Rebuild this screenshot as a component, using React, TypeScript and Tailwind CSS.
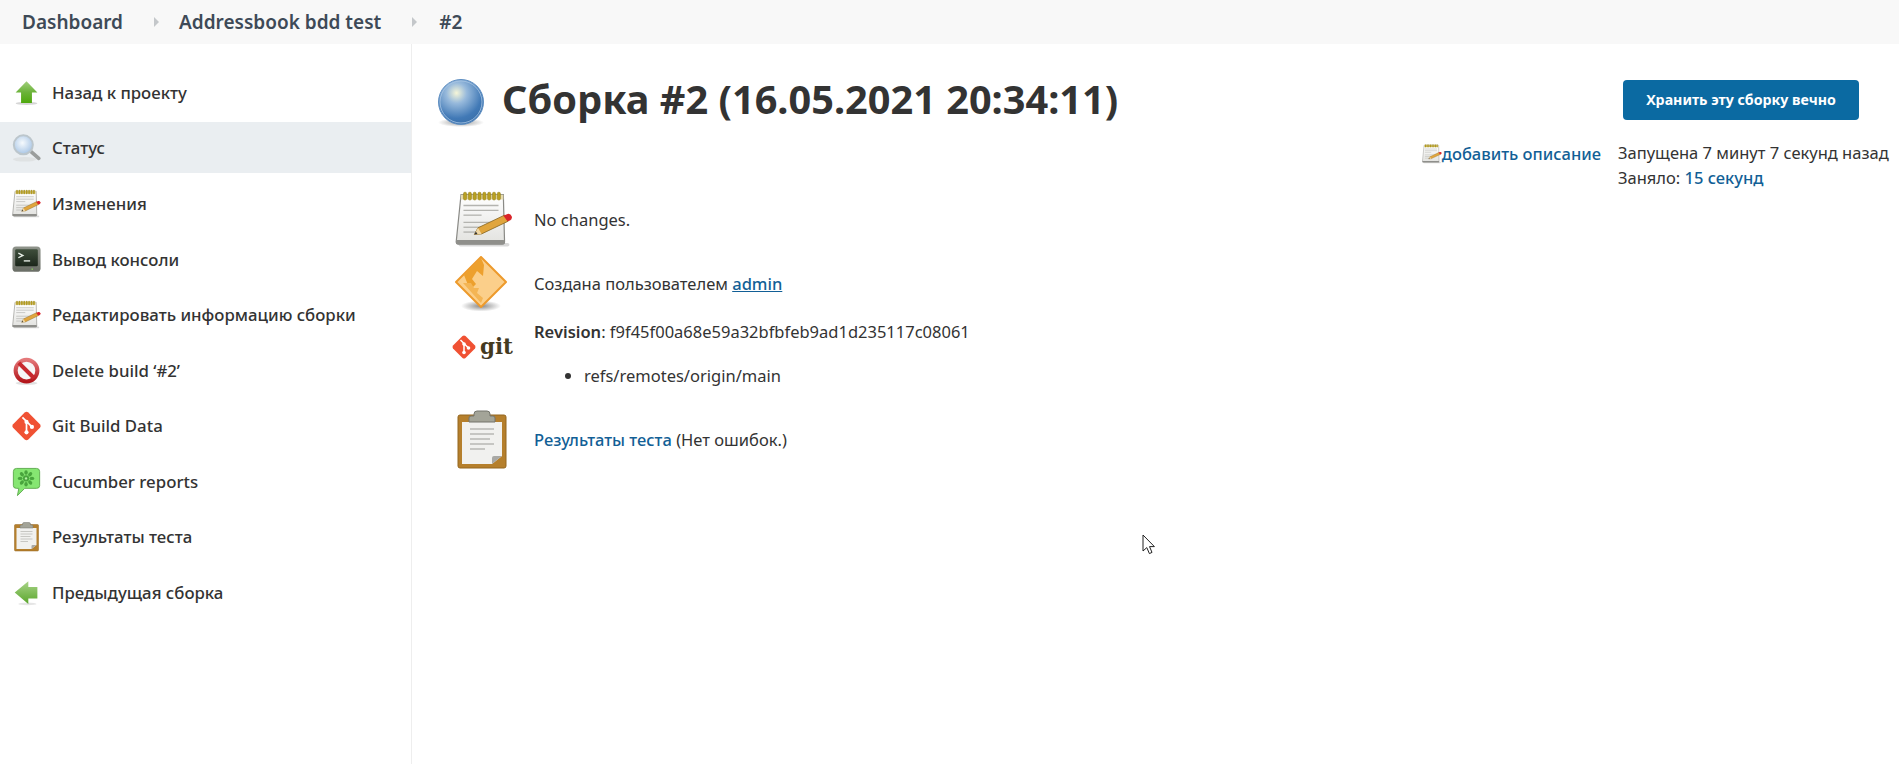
import React from "react";

type IconProps = { className?: string };

function UpArrow({ className }: IconProps) {
  return (
    <svg viewBox="0 0 32 32" className={className}>
      <defs>
        <linearGradient id="up-g" x1="0" y1="0" x2="0" y2="1">
          <stop offset="0" stopColor="#a3cf7e" />
          <stop offset="0.5" stopColor="#6cb33a" />
          <stop offset="1" stopColor="#4ea80c" />
        </linearGradient>
      </defs>
      <ellipse cx="16" cy="27.5" rx="12" ry="1.8" fill="#bbb" opacity="0.6" />
      <path d="M16 3 L28 15.5 L22 15.5 L22 27 L10 27 L10 15.5 L4 15.5 Z" fill="url(#up-g)" />
    </svg>
  );
}

function LeftArrow({ className }: IconProps) {
  return (
    <svg viewBox="0 0 32 32" className={className}>
      <defs>
        <linearGradient id="left-g" x1="0" y1="0" x2="0" y2="1">
          <stop offset="0" stopColor="#a9d488" />
          <stop offset="1" stopColor="#5aa62c" />
        </linearGradient>
      </defs>
      <ellipse cx="17" cy="28" rx="10" ry="1.5" fill="#ccc" opacity="0.5" />
      <path d="M3 15.5 L18 3 L18 9.5 L28 9.5 L28 22 L18 22 L18 28 Z" fill="url(#left-g)" />
    </svg>
  );
}

function Magnifier({ className }: IconProps) {
  return (
    <svg viewBox="0 0 32 32" className={className}>
      <defs>
        <radialGradient id="mag-g" cx="0.45" cy="0.4" r="0.6">
          <stop offset="0" stopColor="#f6fafd" />
          <stop offset="1" stopColor="#a9c6e6" />
        </radialGradient>
      </defs>
      <ellipse cx="14" cy="28.5" rx="13" ry="2.5" fill="#dcdfe0" opacity="0.8" />
      <path d="M21 20 L29.5 27.5" stroke="#9a9d9c" strokeWidth="4" strokeLinecap="round" />
      <circle cx="12.5" cy="12.5" r="10.5" fill="url(#mag-g)" stroke="#bcc6cc" strokeWidth="2.2" />
    </svg>
  );
}

function Notepad({ className }: IconProps) {
  return (
    <svg viewBox="0 0 48 48" className={className}>
      <defs>
        <linearGradient id="note-g" x1="0" y1="0" x2="0" y2="1">
          <stop offset="0" stopColor="#ffffff" />
          <stop offset="1" stopColor="#e2e2df" />
        </linearGradient>
      </defs>
      <rect x="3" y="43" width="42" height="3" rx="1.5" fill="#d9d9d9" />
      <path d="M5 3 H40 L41 42 Q41 44 39 44 H3 Q1 44 1 42 Z" fill="url(#note-g)" stroke="#8a8a86" strokeWidth="1" />
      <rect x="1" y="40.5" width="40" height="3.5" rx="1" fill="#8f8f8b" />
      <path d="M5 3 H40 V7 H4.8 Z" fill="#e7dcae" />
      {[8, 12, 16, 20, 24, 28, 32, 36].map((x) => (
        <rect key={x} x={x - 1} y="1" width="2.6" height="6.5" rx="1.2" fill="#b9a021" stroke="#8e7a14" strokeWidth="0.4" />
      ))}
      <g stroke="#b4b4b0" strokeWidth="1.1">
        <path d="M7 12 H36" />
        <path d="M7 16 H36" />
        <path d="M7 20 H22" />
        <path d="M7 26 H34" />
        <path d="M7 30 H24" />
        <path d="M7 34 H20" />
      </g>
      <path d="M16 36 L19 30.5 L41 20 L44 25 L22 35.5 Z" fill="#e0a53d" stroke="#8b6a25" strokeWidth="0.7" />
      <path d="M16 36 L19 30.5 L22 35.5 Z" fill="#f0d7a4" />
      <path d="M16 36 L17.3 33.6 L18.6 35.6 Z" fill="#333" />
      <path d="M40 20.5 L43.5 19 Q46 18.5 47 21 Q47.5 23.5 45.5 24.5 L43.5 25 Z" fill="#d9252a" />
    </svg>
  );
}

function Terminal({ className }: IconProps) {
  return (
    <svg viewBox="0 0 32 32" className={className}>
      <defs>
        <linearGradient id="term-g" x1="0" y1="0" x2="0" y2="1">
          <stop offset="0" stopColor="#8f948b" />
          <stop offset="1" stopColor="#6a6e66" />
        </linearGradient>
        <linearGradient id="term-s" x1="0" y1="0" x2="0" y2="1">
          <stop offset="0" stopColor="#3f4f3c" />
          <stop offset="1" stopColor="#1b261b" />
        </linearGradient>
      </defs>
      <rect x="0.5" y="1" width="31" height="28" rx="4" fill="url(#term-g)" />
      <rect x="3.5" y="4" width="25" height="19" rx="1.5" fill="url(#term-s)" />
      <path d="M7 8.5 L12 11 L7 13.5" stroke="#e8efe8" strokeWidth="1.5" fill="none" />
      <path d="M13 17 H20" stroke="#e8efe8" strokeWidth="1.5" />
      <rect x="21.5" y="25.5" width="1.6" height="1.2" fill="#8fe25a" />
    </svg>
  );
}

function NoEntry({ className }: IconProps) {
  return (
    <svg viewBox="0 0 32 32" className={className}>
      <defs>
        <linearGradient id="no-g" x1="0" y1="0" x2="0" y2="1">
          <stop offset="0" stopColor="#e4787a" />
          <stop offset="1" stopColor="#b3161b" />
        </linearGradient>
      </defs>
      <ellipse cx="16" cy="29.5" rx="12" ry="1.8" fill="#ccc" opacity="0.6" />
      <circle cx="16" cy="15.5" r="12" fill="#f6f6f6" stroke="url(#no-g)" strokeWidth="4.5" />
      <path d="M7.5 7 L24.5 24" stroke="#c8292e" strokeWidth="4.5" />
    </svg>
  );
}

function GitDiamond({ className }: IconProps) {
  return (
    <svg viewBox="0 0 32 32" className={className}>
      <path d="M14 1.2 Q16 -0.4 18 1.2 L30.8 14 Q32.4 16 30.8 18 L18 30.8 Q16 32.4 14 30.8 L1.2 18 Q-0.4 16 1.2 14 Z" fill="#f05133" />
      <path d="M11.5 6.5 L16 11 L16 23 M16 11 L22 17" stroke="#fff" strokeWidth="1.9" fill="none" />
      <circle cx="16" cy="11.5" r="2.3" fill="#fff" />
      <circle cx="16" cy="23" r="2.3" fill="#fff" />
      <circle cx="22" cy="17" r="2.3" fill="#fff" />
    </svg>
  );
}

function CucumberBubble({ className }: IconProps) {
  return (
    <svg viewBox="0 0 32 32" className={className}>
      <path d="M5 1 H27 Q30.5 1 30.5 4.5 V20 Q30.5 23 27 23 H14 L6 31 L7.5 23 H5 Q1.5 23 1.5 20 V4.5 Q1.5 1 5 1 Z" fill="#86e672" stroke="#5aa84a" strokeWidth="1" />
      <g fill="#49a53d">
        <circle cx="15.5" cy="12" r="3.4" />
        {[0, 45, 90, 135, 180, 225, 270, 315].map((a) => (
          <ellipse key={a} cx="15.5" cy="5.5" rx="1.9" ry="2.6" transform={`rotate(${a} 15.5 12)`} />
        ))}
      </g>
      <circle cx="15.5" cy="12" r="1.3" fill="#b4f0a4" />
    </svg>
  );
}

function Clipboard({ className }: IconProps) {
  return (
    <svg viewBox="0 0 50 60" className={className}>
      <rect x="1" y="5" width="48" height="53" rx="2" fill="#b57f2c" stroke="#94661f" strokeWidth="1" />
      <path d="M5 12 H45 V46 L35 54 H5 Z" fill="#f1f1ef" />
      <path d="M35 54 L45 46 H37 Q35 46 35 48 Z" fill="#a8a8a5" />
      <g stroke="#bcbcb8" strokeWidth="1.6">
        <path d="M13 19 H37" />
        <path d="M13 24 H37" />
        <path d="M13 29 H33" />
        <path d="M13 34 H37" />
        <path d="M13 39 H28" />
      </g>
      <path d="M17 4 Q17 1 20 1 H30 Q33 1 33 4 V6 H36 Q38 6 38 8 V12 H12 V8 Q12 6 14 6 H17 Z" fill="#a3a498" stroke="#74756c" strokeWidth="1" />
    </svg>
  );
}

function BuildBall({ className }: IconProps) {
  return (
    <svg viewBox="0 0 48 48" className={className}>
      <defs>
        <radialGradient id="ball-g" cx="0.4" cy="0.3" r="0.75">
          <stop offset="0" stopColor="#f6f6d8" />
          <stop offset="0.3" stopColor="#98badc" />
          <stop offset="0.75" stopColor="#4179b6" />
          <stop offset="1" stopColor="#3a6fa8" />
        </radialGradient>
        <radialGradient id="shadow-g">
          <stop offset="0" stopColor="#999" />
          <stop offset="1" stopColor="#fff" />
        </radialGradient>
      </defs>
      <ellipse cx="24" cy="43.5" rx="23" ry="4.5" fill="url(#shadow-g)" />
      <circle cx="24" cy="23" r="22.5" fill="url(#ball-g)" stroke="#5f8fc2" strokeWidth="1" />
      <circle cx="24" cy="23" r="21" fill="none" stroke="#a9c6e4" strokeWidth="0.8" />
    </svg>
  );
}

function UserDiamond({ className }: IconProps) {
  return (
    <svg viewBox="0 0 52 56" className={className}>
      <defs>
        <radialGradient id="dia-shadow">
          <stop offset="0" stopColor="#888" />
          <stop offset="1" stopColor="#fff" />
        </radialGradient>
      </defs>
      <ellipse cx="26" cy="50" rx="20" ry="5.5" fill="url(#dia-shadow)" />
      <path d="M26 1 L51 26 L26 51 L1 26 Z" fill="#fbcf8a" stroke="#ed9a2c" strokeWidth="2" strokeLinejoin="round" />
      <path d="M26 2 L9 19 L15 34 L21 28 L17 23 L22 15 L28 20 L29 9 Z" fill="#eda02d" />
      <path d="M8 27 L26 47 L28 42 L22 37 L24 32 L19 32 L16 27 Z" fill="#f4b554" />
    </svg>
  );
}

function GitLogo({ className }: IconProps) {
  return (
    <svg viewBox="0 -4 64 34" className={className}>
      <path d="M10.5 1 Q12 0 13.5 1 L23 10.5 Q24 12 23 13.5 L13.5 23 Q12 24 10.5 23 L1 13.5 Q0 12 1 10.5 Z" fill="#f05133" />
      <path d="M8.5 5 L12 8.5 L12 17.5 M12 8.5 L16.5 13" stroke="#fff" strokeWidth="1.5" fill="none" />
      <circle cx="12" cy="9" r="1.8" fill="#fff" />
      <circle cx="12" cy="17.5" r="1.8" fill="#fff" />
      <circle cx="16.5" cy="13" r="1.8" fill="#fff" />
      <text x="28" y="19" fill="#443a1f" fontSize="23" fontWeight="700" fontFamily="'DejaVu Serif', serif" textLength="33" lengthAdjust="spacingAndGlyphs">
        git
      </text>
    </svg>
  );
}

function Cursor() {
  return (
    <svg viewBox="0 0 14 22" className="absolute left-[1142px] top-[534px] h-[22px] w-[14px]">
      <path d="M1 1 V17 L4.8 13.6 L7.4 19.6 L10 18.4 L7.5 12.6 H12.4 Z" fill="#fff" stroke="#222" strokeWidth="1" />
    </svg>
  );
}

function Chevron() {
  return <span className="h-0 w-0 border-y-[5px] border-l-[5px] border-y-transparent border-l-[#c4c7ca]" />;
}

const SIDE_ITEMS = [
  { label: "Назад к проекту", icon: UpArrow },
  { label: "Статус", icon: Magnifier, active: true },
  { label: "Изменения", icon: Notepad },
  { label: "Вывод консоли", icon: Terminal },
  { label: "Редактировать информацию сборки", icon: Notepad },
  { label: "Delete build ‘#2’", icon: NoEntry },
  { label: "Git Build Data", icon: GitDiamond },
  { label: "Cucumber reports", icon: CucumberBubble },
  { label: "Результаты теста", icon: Clipboard },
  { label: "Предыдущая сборка", icon: LeftArrow },
];

export default function App() {
  return (
    <div className="relative flex h-[764px] flex-col overflow-hidden bg-white font-['Noto_Sans',sans-serif] text-[16.5px] text-[#333]">
      <nav className="flex h-11 items-center bg-[#f8f8f8] pl-[22px] text-[19px] font-semibold text-[#3e4a57]">
        <span>Dashboard</span>
        <span className="ml-[31px] mr-[20px] flex"><Chevron /></span>
        <span>Addressbook bdd test</span>
        <span className="ml-[31px] mr-[22px] flex"><Chevron /></span>
        <span>#2</span>
      </nav>
      <div className="flex flex-1">
        <aside className="w-[412px] shrink-0 border-r border-[#eeeeee] pt-[23.5px]">
          <ul className="flex flex-col gap-[4.5px]">
            {SIDE_ITEMS.map((item) => {
              const Icon = item.icon;
              return (
                <li
                  key={item.label}
                  className={`flex h-[51px] items-center gap-[11px] pl-3 text-[16.8px] font-medium text-[#333] ${item.active ? "-mt-[1px] mb-[1px] bg-[#eaeef1]" : ""}`}
                >
                  <Icon className="h-[30px] w-[29px] shrink-0" />
                  <span>{item.label}</span>
                </li>
              );
            })}
          </ul>
        </aside>
        <main className="min-w-0 flex-1 pl-[25px] pr-[11px]">
          <div className="flex items-start justify-between pr-[29px] pt-[34px]">
            <div className="flex items-center gap-[17px]">
              <BuildBall className="h-[50px] w-[48px]" />
              <h1 className="-mt-[8px] text-[39.7px] font-bold leading-[46px] text-[#333]">Сборка #2 (16.05.2021 20:34:11)</h1>
            </div>
            <button className="mt-[2px] h-10 w-[236px] rounded bg-[#0b6aa2] text-[14.2px] font-bold text-white">
              Хранить эту сборку вечно
            </button>
          </div>
          <div className="mt-[12px] flex justify-end gap-[17px]">
            <a className="mt-[3px] flex h-[22px] items-center font-medium text-[#125f96]">
              <Notepad className="h-5 w-5" />
              <span>добавить описание</span>
            </a>
            <div className="w-[270px] whitespace-nowrap leading-[25px]">
              <div>Запущена 7 минут 7 секунд назад</div>
              <div>
                Заняло: <a className="font-medium text-[#125f96]">15 секунд</a>
              </div>
            </div>
          </div>
          <div className="ml-[18px] flex flex-col">
            <div className="flex h-[60px] items-center">
              <Notepad className="h-[58px] w-[58px] shrink-0" />
              <span className="ml-[21px]">No changes.</span>
            </div>
            <div className="mt-[4px] flex h-[60px] items-center">
              <UserDiamond className="h-14 w-[52px] shrink-0" />
              <span className="ml-[27px]">
                Создана пользователем <a className="font-medium text-[#125f96] underline">admin</a>
              </span>
            </div>
            <div className="mt-[4px] flex h-[86px] items-start">
              <GitLogo className="-ml-[3px] mt-[13px] h-[34px] w-[64px] shrink-0" />
              <div className="ml-[18px]">
                <div className="leading-[28px]">
                  <b className="font-semibold">Revision</b>: f9f45f00a68e59a32bfbfeb9ad1d235117c08061
                </div>
                <ul className="mt-[16px] list-disc pl-[50px] leading-[28px]">
                  <li>refs/remotes/origin/main</li>
                </ul>
              </div>
            </div>
            <div className="mt-[5px] flex h-[62px] items-center">
              <Clipboard className="ml-[2px] h-[60px] w-[50px] shrink-0" />
              <span className="ml-[27px]">
                <a className="font-medium text-[#125f96]">Результаты теста</a> (Нет ошибок.)
              </span>
            </div>
          </div>
        </main>
      </div>
      <Cursor />
    </div>
  );
}
